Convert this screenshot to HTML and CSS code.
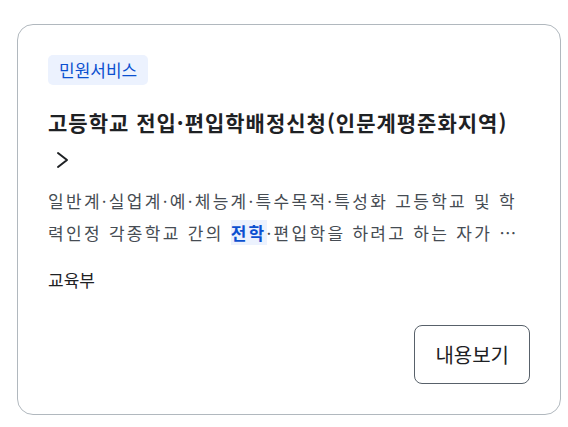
FILE: index.html
```html
<!DOCTYPE html>
<html lang="ko">
<head>
  <meta charset="UTF-8">
  <title>민원서비스</title>
  <link rel="stylesheet" href="styles.css">
</head>
<body>
  <div class="page">
    <!-- Search result card -->
    <div class="card">
      <div class="badge-row">
        <span class="badge">민원서비스</span>
      </div>
      <h2 class="title">
        고등학교 전입·편입학배정신청(인문계평준화지역)
        <svg class="chevron" width="24" height="24" viewBox="0 0 24 24" aria-hidden="true">
          <path d="M10 5l9 7-9 7" fill="none" stroke="currentColor" stroke-width="2" stroke-linecap="round" stroke-linejoin="round"/>
        </svg>
      </h2>
      <p class="desc">일반계·실업계·예·체능계·특수목적·특성화 고등학교 및 학력인정 각종학교 간의 <mark>전학</mark>·편입학을 하려고 하는 자가 …</p>
      <div class="org">교육부</div>
      <div class="actions">
        <button class="btn-outline">내용보기</button>
      </div>
    </div>
  </div>
</body>
</html>
```

FILE: styles.css
```css
:root {
  --primary: #0b50d0;
  --primary-light: #ecf2fe;
  --text: #1e2124;
  --text-sub: #464c53;
  --border: #b1b8be;
}
body {
  margin: 0;
  background: #ffffff;
  color: var(--text);
  font-family: "Noto Sans CJK KR", "Noto Sans", sans-serif;
}
.page {
  padding: 24px 7px 12px 17px;
}
/* Card */
.card {
  border: 1px solid var(--border);
  border-radius: 16px;
  padding: 30px 30px 30px;
}
.badge-row {
  display: flex;
}
.badge {
  padding: 0 11px;
  height: 30px;
  line-height: 30px;
  font-size: 17px;
  color: var(--primary);
  background: var(--primary-light);
  border-radius: 5px;
}
.title {
  margin: 19px 0 0;
  font-size: 21px;
  font-weight: 700;
  letter-spacing: 1px;
  line-height: 36px;
  color: var(--text);
}
.chevron {
  vertical-align: -5px;
}
.desc {
  margin: 9px 0 0;
  font-size: 17px;
  letter-spacing: 2.3px;
  line-height: 32px;
  color: var(--text-sub);
}
.desc mark {
  background: var(--primary-light);
  color: var(--primary);
  font-weight: 700;
}
.org {
  margin-top: 19px;
  font-size: 17px;
  line-height: 24px;
  color: var(--text);
}
.actions {
  display: flex;
  justify-content: flex-end;
  margin-top: 33px;
}
.btn-outline {
  height: 59px;
  padding: 0 20px;
  font-family: inherit;
  font-size: 20px;
  color: var(--text);
  background: #ffffff;
  border: 1px solid #58616a;
  border-radius: 8px;
  cursor: pointer;
}
```
